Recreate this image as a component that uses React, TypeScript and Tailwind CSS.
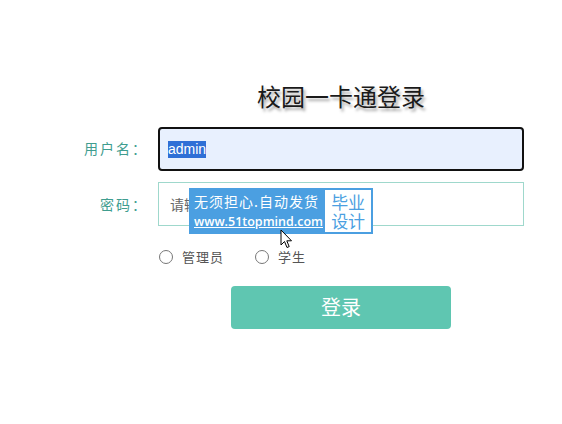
import React from "react";

const Cursor = () => (
  <svg
    className="absolute left-[280px] top-[229px]"
    width="13"
    height="20"
    viewBox="0 0 13 20"
  >
    <path
      d="M1 1 L1 16 L4.5 12.5 L7 18.5 L9.2 17.6 L6.8 11.8 L11.5 11.8 Z"
      fill="#fff"
      stroke="#000"
      strokeWidth="1"
      strokeLinejoin="round"
    />
  </svg>
);

const Watermark = () => (
  <div className="absolute left-[189px] top-[188px] flex h-[46px] w-[184px] items-center bg-[#4b9fe1] pl-[5px] pr-[2px]">
    <div className="flex w-[132px] flex-col leading-none text-white">
      <span className="text-[14px] font-normal tracking-[1px]">无须担心.自动发货</span>
      <span className="mt-[8px] text-[12.5px] font-semibold underline [font-family:'Open_Sans',sans-serif]">
        www.51topmind.com
      </span>
    </div>
    <div className="ml-auto flex h-[42px] w-[46px] flex-col items-center justify-center bg-white text-[17px] leading-[19px] text-[#4b9fe1]">
      <span>毕业</span>
      <span>设计</span>
    </div>
  </div>
);

export default function App() {
  return (
    <div className="relative h-[424px] w-[562px] bg-white [font-family:'Noto_Sans_CJK_SC',sans-serif]">
      <div className="pt-[80px]">
        <div className="grid grid-cols-[148px_366px] gap-x-[10px]">
          <div />
          <h1 className="text-center text-[24px] leading-[32px] text-[#1a1a1a] [text-shadow:2px_3px_3px_rgba(0,0,0,0.35)]">
            校园一卡通登录
          </h1>
        </div>

        <div className="mt-[15px] grid grid-cols-[148px_366px] items-center gap-x-[10px] gap-y-[11px]">
          <label className="-mt-[2px] text-right text-[14px] tracking-[2px] text-[#3f9d8f]">用户名：</label>
          <div className="flex h-[44px] items-center rounded-[4px] border-2 border-[#111] bg-[#e8f0fe] pl-[8px]">
            <span className="bg-[#2f6fd6] text-[14px] leading-[17px] text-white [font-family:'Liberation_Sans',sans-serif]">
              admin
            </span>
          </div>

          <label className="text-right text-[14px] tracking-[2px] text-[#3f9d8f]">密码：</label>
          <div className="flex h-[44px] items-center border border-[#9fd8cc] pl-[11px] text-[14px] text-[#666]">
            请输入密码
          </div>
        </div>

        <div className="ml-[159px] mt-[21px] flex items-center text-[13px] tracking-[1px] text-[#555]">
          <span className="h-[14px] w-[14px] rounded-full border border-[#777]" />
          <span className="ml-[9px]">管理员</span>
          <span className="ml-[31px] h-[14px] w-[14px] rounded-full border border-[#777]" />
          <span className="ml-[9px]">学生</span>
        </div>

        <div className="ml-[231px] mt-[19px]">
          <button className="flex h-[43px] w-[220px] items-center justify-center rounded-[4px] bg-[#5fc6b1] text-[20px] text-white">
            登录
          </button>
        </div>
      </div>

      <Watermark />
      <Cursor />
    </div>
  );
}
